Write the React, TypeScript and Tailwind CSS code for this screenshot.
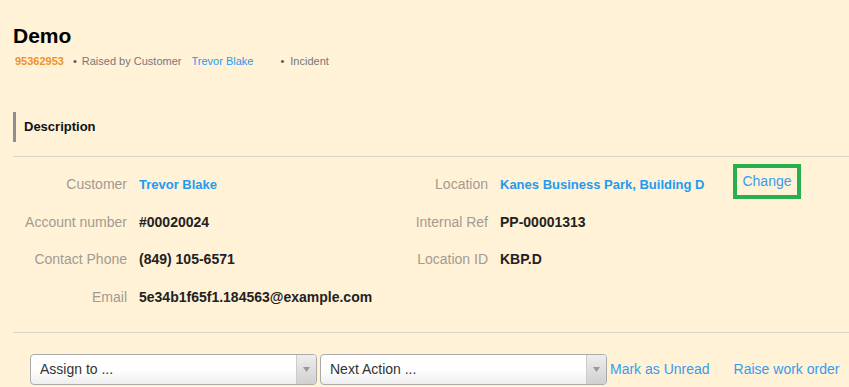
import React from 'react';

const labelCls = 'text-right text-[14px] text-[#a39b92]';
const valueCls = 'ml-[12px] text-[14px] font-bold text-[#222]';
const linkValueCls = 'ml-[12px] text-[13px] font-bold text-[#1e9bf0]';

const Field = ({ label, width, children }: { label: string; width: string; children: React.ReactNode }) => (
  <div className="flex items-center h-[37.5px]">
    <div className={`${labelCls} ${width}`}>{label}</div>
    {children}
  </div>
);

const Select = ({ placeholder }: { placeholder: string }) => (
  <div className="flex w-[287px] h-[31px] rounded-[4px] border border-[#aaa] bg-gradient-to-b from-white from-50% to-[#eee] overflow-hidden">
    <div className="flex-1 pl-[9px] flex items-center text-[14px] text-[#333]">{placeholder}</div>
    <div className="w-[20px] border-l border-[#ccc] bg-gradient-to-b from-[#eee] to-[#d0d0d0] flex items-center justify-center">
      <svg width="7" height="5" viewBox="0 0 7 5">
        <path d="M0 0 L7 0 L3.5 5 Z" fill="#999" />
      </svg>
    </div>
  </div>
);

const App = () => {
  return (
    <div className="min-h-screen w-full bg-[#fff2d7] pl-[13px] pt-[24px] font-['Liberation_Sans',Arial,sans-serif]">
      <h1 className="text-[21px] leading-[24px] font-bold text-black">Demo</h1>
      <div className="mt-[6px] flex items-center h-[14px] text-[11px] leading-[14px] text-[#777]">
        <span className="ml-[2px] font-bold text-[#f0922a]">95362953</span>
        <span className="ml-[9px] text-[#555]">•</span>
        <span className="ml-[5px]">Raised by Customer</span>
        <span className="ml-[10px] text-[#1e9bf0]">Trevor Blake</span>
        <span className="ml-[27px] text-[#555]">•</span>
        <span className="ml-[6px]">Incident</span>
      </div>

      <div className="mt-[44px] h-[30px] border-l-[3px] border-[#8f8f8f] pl-[8px] flex items-center text-[13px] font-bold text-[#111]">
        Description
      </div>

      <div className="mt-[14px] border-t border-[#dcd6cb] pt-[9px] pb-[16px] flex">
        <div className="w-[375px]">
          <Field label="Customer" width="w-[114px]">
            <span className={linkValueCls}>Trevor Blake</span>
          </Field>
          <Field label="Account number" width="w-[114px]">
            <span className={valueCls}>#00020024</span>
          </Field>
          <Field label="Contact Phone" width="w-[114px]">
            <span className={valueCls}>(849) 105-6571</span>
          </Field>
          <Field label="Email" width="w-[114px]">
            <span className={valueCls}>5e34b1f65f1.184563@example.com</span>
          </Field>
        </div>
        <div className="flex-1">
          <Field label="Location" width="w-[100px]">
            <span className={linkValueCls}>Kanes Business Park, Building D</span>
            <span className="ml-[29px] mb-[6px] border-4 border-[#27b04b] px-[5px] h-[35px] leading-[27px] text-[14px] text-[#3a9bee]">
              Change
            </span>
          </Field>
          <Field label="Internal Ref" width="w-[100px]">
            <span className={valueCls}>PP-00001313</span>
          </Field>
          <Field label="Location ID" width="w-[100px]">
            <span className={valueCls}>KBP.D</span>
          </Field>
        </div>
      </div>

      <div className="border-t border-[#dcd6cb] pt-[21px] pl-[17px] flex items-center gap-[3px]">
        <Select placeholder="Assign to ..." />
        <Select placeholder="Next Action ..." />
        <span className="text-[14px] text-[#3a9bee]">Mark as Unread</span>
        <span className="ml-[21px] text-[14px] text-[#3a9bee]">Raise work order</span>
      </div>
    </div>
  );
};

export default App;
